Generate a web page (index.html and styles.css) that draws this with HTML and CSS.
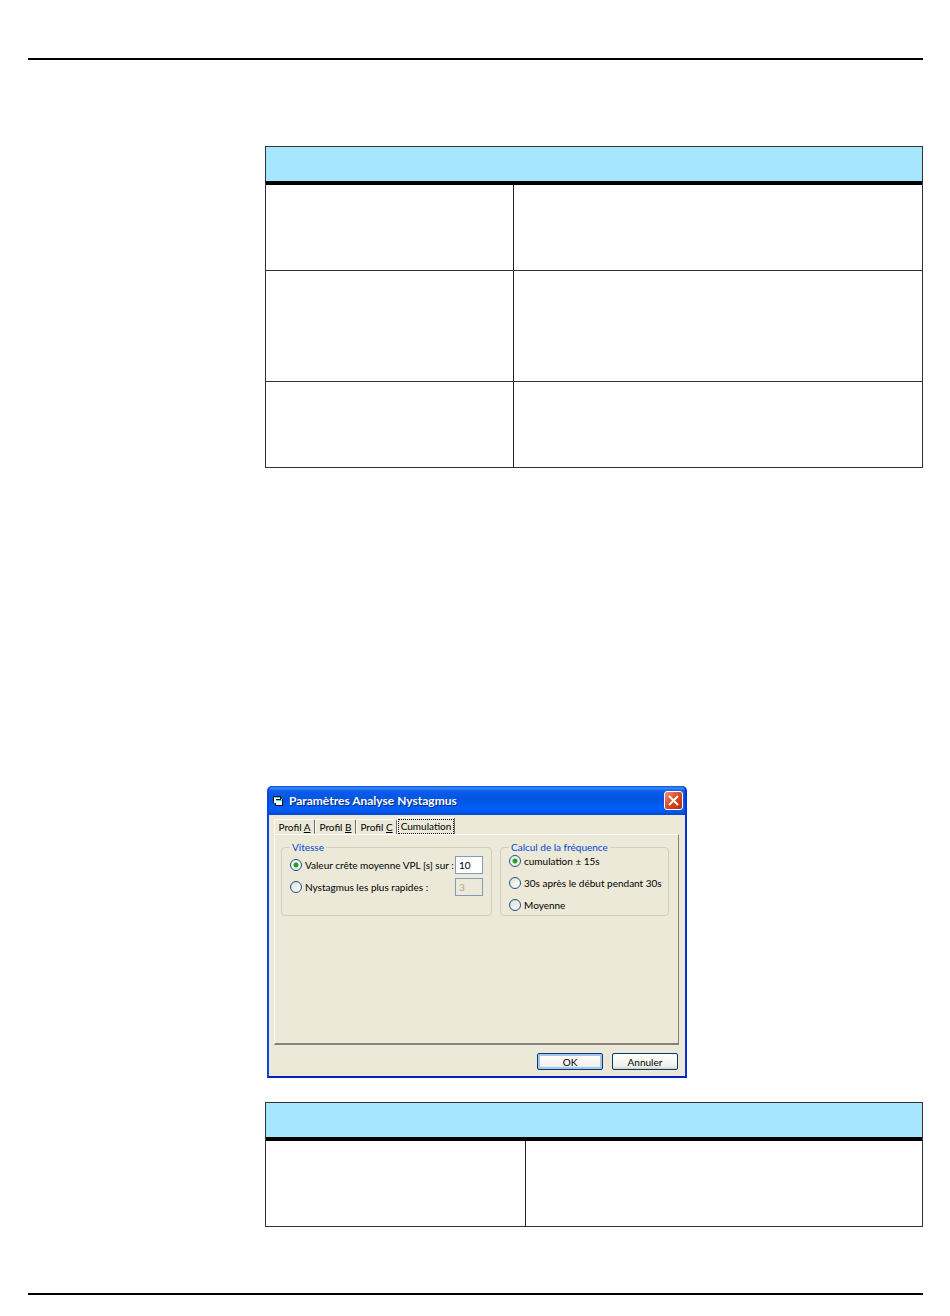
FILE: index.html
```html
<!DOCTYPE html>
<html lang="fr">
  <head>
    <meta charset="UTF-8" />
    <meta name="viewport" content="width=device-width, initial-scale=1.0" />
    <title>Paramètres Analyse Nystagmus</title>
    <link rel="stylesheet" href="styles.css">
  </head>
  <body>
    <hr class="rule" />
    <main class="content">
      <table class="grid gridFirst">
        <colgroup>
          <col class="colName" />
          <col />
        </colgroup>
        <thead>
          <tr><th colspan="2"></th></tr>
        </thead>
        <tbody>
          <tr><td></td><td></td></tr>
          <tr class="tall"><td></td><td></td></tr>
          <tr><td></td><td></td></tr>
        </tbody>
      </table>

      <form class="dialog">
        <div class="titleBar">
          <svg class="appIcon" viewBox="0 0 10 10" width="10" height="10">
            <path d="M0 0h8v3h2v7H2V7H0z" fill="#111" />
            <path d="M1 2h6v1h2v6H3V7H1z" fill="#fff" />
            <path d="M1 1h6v1H1zM3 4h6v1H3z" fill="#2ee6e6" />
            <path d="M3 3h5v1H3z" fill="#111" />
          </svg>
          <span class="title">Paramètres Analyse Nystagmus</span>
          <button class="close" type="button" aria-label="Fermer">
            <svg viewBox="0 0 11 11" width="11" height="11">
              <path d="M1 1l9 9M10 1l-9 9" stroke="#fff" stroke-width="2" />
            </svg>
          </button>
        </div>
        <div class="client">
          <div class="tabs">
            <button class="tab" type="button">Profil <u>A</u></button>
            <button class="tab" type="button">Profil <u>B</u></button>
            <button class="tab" type="button">Profil <u>C</u></button>
            <button class="tab active" type="button"><span>Cumulation</span></button>
          </div>
          <div class="panel">
            <fieldset class="group speed">
              <legend>Vitesse</legend>
              <div class="row">
                <input type="radio" name="speed" id="peak" checked />
                <label for="peak">Valeur crête moyenne VPL [s] sur :</label>
                <input class="num" type="text" value="10" aria-label="Valeur crête" />
              </div>
              <div class="row">
                <input type="radio" name="speed" id="fastest" />
                <label for="fastest">Nystagmus les plus rapides :</label>
                <input class="num" type="text" value="3" aria-label="Nystagmus" disabled />
              </div>
            </fieldset>
            <fieldset class="group freq">
              <legend>Calcul de la fréquence</legend>
              <div class="row">
                <input type="radio" name="freq" id="cumul" checked />
                <label for="cumul">cumulation ± 15s</label>
              </div>
              <div class="row">
                <input type="radio" name="freq" id="after" />
                <label for="after">30s après le début pendant 30s</label>
              </div>
              <div class="row">
                <input type="radio" name="freq" id="mean" />
                <label for="mean">Moyenne</label>
              </div>
            </fieldset>
          </div>
          <div class="actions">
            <button class="btn default" type="submit">OK</button>
            <button class="btn" type="button">Annuler</button>
          </div>
        </div>
      </form>

      <table class="grid gridLast">
        <colgroup>
          <col class="colName" />
          <col />
        </colgroup>
        <thead>
          <tr><th colspan="2"></th></tr>
        </thead>
        <tbody>
          <tr><td></td><td></td></tr>
        </tbody>
      </table>
    </main>
    <hr class="rule" />
  </body>
</html>
```
FILE: styles.css
```css
* {
  box-sizing: border-box;
}
body {
  margin: 0;
  padding: 58px 27px 20px 28px;
  background: #fff;
  font: 10px/14px Lato, "Liberation Sans", sans-serif;
  color: #000;
}
.rule {
  height: 2px;
  margin: 0;
  border: 0;
  background: #000;
}
.content {
  padding: 86px 0 66px 237px;
}

/* tables */
.grid {
  width: 100%;
  table-layout: fixed;
  border-collapse: separate;
  border-spacing: 0;
  border: 1px solid #333;
  border-bottom: 0;
}
.grid .colName {
  width: 248px;
}
.gridLast .colName {
  width: 260px;
}
.grid th {
  height: 38px;
  padding: 0;
  background: #a6e6ff;
  border-bottom: 4px solid #000;
}
.grid td {
  height: 86px;
  padding: 0;
  border-bottom: 1px solid #333;
}
.grid .tall td {
  height: 111px;
}
.grid td:first-child {
  border-right: 1px solid #222;
}

/* dialog */
.dialog {
  width: 420px;
  margin: 318px 0 24px 2px;
  border: 2px solid #0a46e4;
  border-top: 0;
  border-right-color: #0831d9;
  border-bottom-color: #0020c0;
  border-radius: 5px 5px 0 0;
  background: #0a46e4;
}
.titleBar {
  display: flex;
  align-items: center;
  height: 29px;
  padding: 0 2px 0 4px;
  border-radius: 5px 5px 0 0;
  background: linear-gradient(#0a46d4, #3a8cff 2px, #0a5ce8 5px, #0054e3 14px, #0060fa 23px, #0048d0);
}
.title {
  flex: 1;
  margin-left: 6px;
  font: bold 12px/16px Lato, "Open Sans", sans-serif;
  color: #fff;
  text-shadow: 1px 1px #0a2a80;
}
.close {
  display: flex;
  align-items: center;
  justify-content: center;
  width: 19px;
  height: 19px;
  padding: 0;
  border: 1px solid #fff;
  border-radius: 3px;
  background: linear-gradient(135deg, #ee9478, #dc4822 50%, #b83010);
}
.client {
  padding: 2px 6px 6px 5px;
  background: #ece9d8;
}
.tabs {
  display: flex;
  align-items: flex-end;
}
.tab {
  width: 41px;
  height: 15px;
  padding: 0;
  border: 1px solid #fff;
  border-right-color: #716f64;
  border-bottom: 0;
  border-radius: 2px 2px 0 0;
  background: #ece9d8;
  font: inherit;
  white-space: nowrap;
}
.tab.active {
  width: 58px;
  height: 17px;
}
.tab.active span {
  display: block;
  border: 1px dotted #000;
  line-height: 13px;
}
.panel {
  display: flex;
  align-items: flex-start;
  gap: 8px;
  height: 211px;
  padding: 6px 9px 0 6px;
  border: 1px solid #fff;
  border-right-color: #858277;
  border-bottom: 2px solid #858277;
}
.group {
  min-width: 0;
  height: 75px;
  margin: 0;
  padding: 0 8px;
  border: 1px solid #d0d0bf;
  border-radius: 4px;
}
.speed {
  width: 211px;
}
.freq {
  flex: 1;
}
.group legend {
  padding: 0 2px;
  line-height: 12px;
  color: #0046d5;
}
.row {
  display: flex;
  align-items: center;
  height: 18px;
  margin-bottom: 4px;
  white-space: nowrap;
}
.speed .row:first-of-type {
  margin-top: 3px;
}
.freq .row:first-of-type {
  margin-top: -1px;
}
.row input[type="radio"] {
  appearance: none;
  flex: none;
  width: 12px;
  height: 12px;
  margin: 0 3px 0 0;
  border: 1px solid #1c5180;
  border-radius: 50%;
  background: linear-gradient(135deg, #dcdcd6, #fff);
}
.row input[type="radio"]:checked {
  background: radial-gradient(circle, #21a121 2px, #f4f4f0 3px);
}
.num {
  flex: none;
  width: 28px;
  height: 18px;
  margin-left: auto;
  padding: 0 3px;
  border: 1px solid #7f9db9;
  background: #fff;
  font: inherit;
}
.num:disabled {
  background: #ece9d8;
  color: #aca899;
}
.actions {
  display: flex;
  justify-content: flex-end;
  gap: 9px;
  padding: 8px 1px 0 0;
}
.btn {
  width: 66px;
  height: 17px;
  padding: 0;
  border: 1px solid #003c74;
  border-radius: 2px;
  background: linear-gradient(#fff, #f2f1ea 80%, #d6d0c5);
  font: inherit;
}
.btn.default {
  box-shadow: inset 0 0 0 2px #a6c4f0;
}
```
